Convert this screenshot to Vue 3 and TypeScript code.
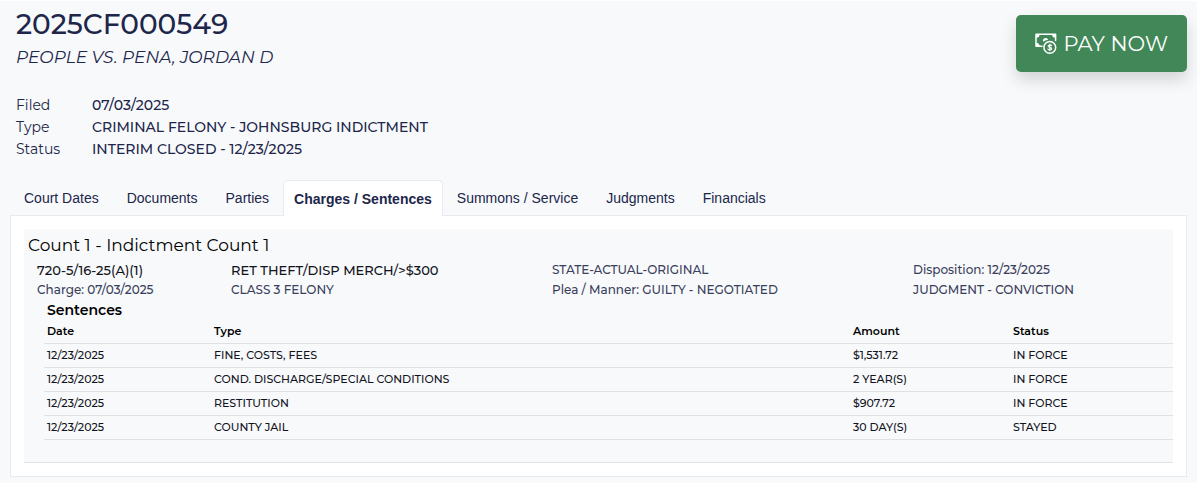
<script setup lang="ts">
import { ref } from 'vue'

interface Sentence {
  date: string
  type: string
  amount: string
  status: string
}

const details = [
  { label: 'Filed', value: '07/03/2025' },
  { label: 'Type', value: 'CRIMINAL FELONY - JOHNSBURG INDICTMENT' },
  { label: 'Status', value: 'INTERIM CLOSED - 12/23/2025' },
]

const tabs = [
  'Court Dates',
  'Documents',
  'Parties',
  'Charges / Sentences',
  'Summons / Service',
  'Judgments',
  'Financials',
]
const activeTab = ref('Charges / Sentences')

const sentences: Sentence[] = [
  { date: '12/23/2025', type: 'FINE, COSTS, FEES', amount: '$1,531.72', status: 'IN FORCE' },
  { date: '12/23/2025', type: 'COND. DISCHARGE/SPECIAL CONDITIONS', amount: '2 YEAR(S)', status: 'IN FORCE' },
  { date: '12/23/2025', type: 'RESTITUTION', amount: '$907.72', status: 'IN FORCE' },
  { date: '12/23/2025', type: 'COUNTY JAIL', amount: '30 DAY(S)', status: 'STAYED' },
]
</script>

<template>
  <main class="page">
    <header class="case-header">
      <div>
        <h1 class="case-number">2025CF000549</h1>
        <p class="case-title">PEOPLE VS. PENA, JORDAN D</p>
        <dl class="details">
          <template v-for="item in details" :key="item.label">
            <dt>{{ item.label }}</dt>
            <dd>{{ item.value }}</dd>
          </template>
        </dl>
      </div>
      <button type="button" class="pay">
        <svg class="pay-icon" viewBox="0 0 22 22" aria-hidden="true">
          <path
            d="M7 13.3H1V1.2h19.6V7.6"
            fill="none"
            stroke="currentColor"
            stroke-width="1.5"
            stroke-linejoin="round"
            stroke-linecap="round"
          />
          <path d="M1 1.2h3.6A3.6 3.6 0 0 1 1 4.8zM20.6 1.2h-3.6A3.6 3.6 0 0 0 20.6 4.8zM1 13.3h3.6A3.6 3.6 0 0 0 1 9.7z" fill="currentColor" />
          <path d="M8.2 8.8A2.6 2.6 0 1 1 13.2 6.8Q10 7.2 8.2 8.8z" fill="currentColor" />
          <circle cx="14.8" cy="14.4" r="5.9" fill="none" stroke="currentColor" stroke-width="1.5" />
          <path
            d="M16.6 12.7C16 11.6 13.2 11.6 13.1 13.1C13 14.7 16.7 14 16.7 15.8C16.6 17.4 13.6 17.3 12.9 16M14.8 11v6.8"
            fill="none"
            stroke="currentColor"
            stroke-width="1.1"
            stroke-linecap="round"
          />
        </svg>
        <span>PAY NOW</span>
      </button>
    </header>

    <div class="tabs" role="tablist">
      <button
        v-for="tab in tabs"
        :key="tab"
        type="button"
        role="tab"
        class="tab"
        :class="{ active: tab === activeTab }"
        :aria-selected="tab === activeTab"
        @click="activeTab = tab"
      >
        {{ tab }}
      </button>
    </div>

    <section class="panel" role="tabpanel">
      <article class="count">
        <h2 class="count-title">Count 1 - Indictment Count 1</h2>
        <div class="charge">
          <div>
            <div class="strong">720-5/16-25(A)(1)</div>
            <div>Charge: 07/03/2025</div>
          </div>
          <div>
            <div class="strong">RET THEFT/DISP MERCH/&gt;$300</div>
            <div>CLASS 3 FELONY</div>
          </div>
          <div>
            <div>STATE-ACTUAL-ORIGINAL</div>
            <div>Plea / Manner: GUILTY - NEGOTIATED</div>
          </div>
          <div>
            <div>Disposition: 12/23/2025</div>
            <div>JUDGMENT - CONVICTION</div>
          </div>
        </div>
        <div class="sentences">
          <h3 class="sentences-title">Sentences</h3>
          <table>
            <colgroup>
              <col class="col-date" />
              <col />
              <col class="col-amount" />
              <col class="col-status" />
            </colgroup>
            <thead>
              <tr>
                <th scope="col">Date</th>
                <th scope="col">Type</th>
                <th scope="col">Amount</th>
                <th scope="col">Status</th>
              </tr>
            </thead>
            <tbody>
              <tr v-for="row in sentences" :key="row.type">
                <td>{{ row.date }}</td>
                <td>{{ row.type }}</td>
                <td>{{ row.amount }}</td>
                <td>{{ row.status }}</td>
              </tr>
            </tbody>
          </table>
        </div>
      </article>
    </section>
  </main>
</template>

<style>
body {
  background: #f8f9fb;
}
</style>

<style scoped>
.page {
  box-sizing: border-box;
  padding: 9px 10px 6px 10px;
  border-top: 1px solid #ffffff;
  border-right: 3px solid #ffffff;
  background: #f8f9fb;
  color: #20264a;
  font-family: Montserrat, Inter, "Liberation Sans", sans-serif;
}

h1,
h2,
h3,
p,
dl,
dd {
  margin: 0;
}

.case-header {
  display: flex;
  justify-content: space-between;
  align-items: flex-start;
  padding-left: 6px;
}

.case-number {
  font-size: 28px;
  font-weight: 500;
  line-height: 28px;
}

.case-title {
  margin-top: 8px;
  font-size: 17px;
  font-style: italic;
  line-height: 22px;
}

.details {
  display: grid;
  grid-template-columns: 76px auto;
  margin-top: 26px;
  font-size: 14px;
  line-height: 22px;
}

.details dd {
  font-weight: 500;
}

.pay {
  display: flex;
  align-items: center;
  justify-content: center;
  gap: 6px;
  margin-top: 5px;
  padding: 14px 19px;
  border: 0;
  border-radius: 5px;
  background: #418758;
  box-shadow: 0 8px 16px rgba(0, 0, 0, 0.15);
  color: #ffffff;
  font-family: inherit;
  font-size: 21px;
  line-height: 29px;
  cursor: pointer;
}

.pay-icon {
  width: 22px;
  height: 22px;
}

.tabs {
  display: flex;
  margin-top: 20px;
}

.tab {
  height: 35px;
  padding: 0 13px;
  border: 1px solid transparent;
  border-bottom: 0;
  border-radius: 5px 5px 0 0;
  background: transparent;
  color: #20264a;
  font-family: "Liberation Sans", Arial, sans-serif;
  font-size: 14px;
  line-height: 22px;
  cursor: pointer;
}

.tab.active {
  margin-bottom: -1px;
  height: 36px;
  padding: 0 10px;
  border-color: #e8eaee;
  background: #ffffff;
  font-weight: 700;
}

.panel {
  padding: 13px;
  border: 1px solid #e8eaee;
  background: #ffffff;
}

.count {
  padding: 4px 0 22px 4px;
  border-bottom: 1px solid #dee2e6;
  background: #f8f9fb;
}

.count-title {
  color: #000000;
  font-size: 17px;
  font-weight: 400;
  line-height: 24px;
}

.charge {
  display: grid;
  grid-template-columns: 194fr 321fr 361fr 260fr;
  margin-top: 3px;
  padding-left: 9px;
  color: #3a3f5c;
  font-size: 12px;
  font-weight: 500;
  line-height: 20px;
}

.strong {
  color: #111320;
  font-size: 13px;
}

.sentences {
  padding-left: 16px;
}

.sentences-title {
  padding-left: 3px;
  color: #000000;
  font-size: 14px;
  font-weight: 600;
  line-height: 20px;
}

table {
  width: 100%;
  border-collapse: collapse;
  table-layout: fixed;
  color: #111320;
  font-size: 11px;
  font-weight: 500;
  line-height: 17px;
}

.col-date {
  width: 167px;
}

.col-amount {
  width: 160px;
}

.col-status {
  width: 163px;
}

th,
td {
  padding: 3px;
  border-bottom: 1px solid #dee2e6;
  text-align: left;
}

th {
  color: #000000;
  font-weight: 600;
}
</style>
